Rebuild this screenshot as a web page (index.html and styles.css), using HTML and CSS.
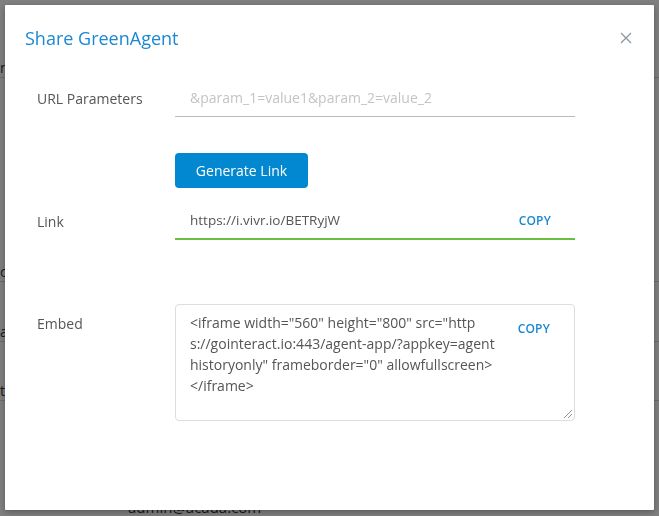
FILE: index.html
```html
<!DOCTYPE html>
<html lang="en">
<head>
  <meta charset="UTF-8" />
  <meta name="viewport" content="width=device-width, initial-scale=1.0"/>
  <title>Share GreenAgent</title>
  <link rel="stylesheet" href="styles.css">
</head>
<body>
  <!-- page behind the dialog -->
  <div class="page">
    <div class="page-row r1">n</div>
    <div class="page-row r2">c</div>
    <div class="page-row r3">a</div>
    <div class="page-row r4">t</div>
    <div class="page-row r5">admin@acada.com</div>
  </div>

  <div class="overlay">
    <div class="modal">
      <div class="modal-header">
        <h2 class="modal-title">Share GreenAgent</h2>
        <button class="close" aria-label="Close">
          <svg width="12" height="12" viewBox="0 0 12 12"><path d="M1 1L11 11M11 1L1 11" stroke="#8a939b" stroke-width="1.2" fill="none"/></svg>
        </button>
      </div>

      <div class="modal-body">
        <div class="form-row">
          <label class="form-label">URL Parameters</label>
          <div class="field">
            <input class="line-input" type="text" placeholder="&amp;param_1=value1&amp;param_2=value_2">
          </div>
        </div>

        <div class="btn-row">
          <button class="btn-primary">Generate Link</button>
        </div>

        <div class="form-row">
          <label class="form-label">Link</label>
          <div class="field link-field">
            <span class="link-text">https://i.vivr.io/BETRyjW</span>
            <span class="copy">COPY</span>
          </div>
        </div>

        <div class="form-row embed-row">
          <label class="form-label">Embed</label>
          <div class="embed-box">
            <div class="embed-text">&lt;iframe width="560" height="800" src="http
s://gointeract.io:443/agent-app/?appkey=agent
historyonly" frameborder="0" allowfullscreen&gt;
&lt;/iframe&gt;</div>
            <span class="copy">COPY</span>
            <span class="grip"></span>
          </div>
        </div>
      </div>
    </div>
  </div>
</body>
</html>
```

FILE: styles.css
```css
* { box-sizing: border-box; }
body {
  margin: 0;
  font-family: "Open Sans", "Liberation Sans", Arial, sans-serif;
  color: #555;
  background: #fff;
  overflow: hidden;
  height: 516px;
}

/* page behind */
.page {
  height: 516px;
  position: relative;
}
.page-row {
  position: absolute;
  left: 0;
  font-size: 14px;
  color: #333;
  width: 100%;
  border-bottom: 1px solid #d8d8d8;
}
.r1 { top: 58px; }
.r2 { top: 262px; }
.r3 { top: 322px; }
.r4 { top: 381px; }
.r5 { top: 497px; left: 128px; width: auto; font-size: 15px; line-height: 20px; border: 0; }

.overlay {
  position: fixed;
  inset: 0;
  background: rgba(0,0,0,0.5);
}
.modal {
  margin: 5px;
  width: 649px;
  height: 505px;
  background: #fff;
  border-radius: 1px;
  box-shadow: 0 2px 6px rgba(0,0,0,0.3);
}
.modal-header {
  display: flex;
  justify-content: space-between;
  align-items: center;
  padding: 20px 20px 0 20px;
}
.modal-title {
  margin: 0;
  font-size: 18px;
  font-weight: 400;
  line-height: 26px;
  color: #1a88d2;
}
.close {
  border: 0;
  background: none;
  padding: 0;
  margin-right: 2px;
  width: 12px;
  height: 12px;
  display: flex;
}

.modal-body {
  padding: 28px 79px 0 32px;
}
.form-row {
  display: flex;
  align-items: center;
}
.form-label {
  width: 138px;
  flex: none;
  font-size: 14px;
  color: #555;
}
.field {
  flex: 1;
  height: 38px;
  display: flex;
  align-items: center;
  padding: 0 24px 0 15px;
  border-bottom: 1px solid #b5bcc1;
}
.line-input {
  border: 0;
  outline: none;
  width: 100%;
  font-family: inherit;
  font-size: 14px;
  color: #555;
  padding: 0;
}
.line-input::placeholder { color: #c4c4c4; }

.btn-row {
  padding: 36px 0 14px 138px;
}
.btn-primary {
  background: #0288d1;
  color: #fff;
  border: 0;
  border-radius: 4px;
  height: 35px;
  width: 133px;
  font-family: inherit;
  font-size: 14px;
  padding: 0;
}

.link-field {
  justify-content: space-between;
  border-bottom-width: 2px;
  border-bottom-color: #6abf40;
}
.link-text {
  font-size: 13.5px;
  color: #555;
}
.copy {
  font-size: 12px;
  font-weight: 600;
  color: #1a88d2;
  letter-spacing: 0.2px;
}

.embed-row {
  align-items: flex-start;
  margin-top: 64px;
}
.embed-row .form-label {
  padding-top: 10px;
}
.embed-box {
  flex: 1;
  height: 117px;
  border: 1px solid #dcdde1;
  border-radius: 4px;
  display: flex;
  justify-content: space-between;
  padding: 7px 24px 0 14px;
  position: relative;
}
.embed-text {
  white-space: pre;
  font-size: 14px;
  line-height: 21px;
  color: #555;
}
.embed-box .copy {
  margin-top: 8px;
}
.grip {
  position: absolute;
  right: 2px;
  bottom: 2px;
  width: 8px;
  height: 8px;
  background: linear-gradient(135deg, transparent 45%, #999 45%, #999 52%, transparent 52%, transparent 70%, #999 70%, #999 77%, transparent 77%);
}
```
